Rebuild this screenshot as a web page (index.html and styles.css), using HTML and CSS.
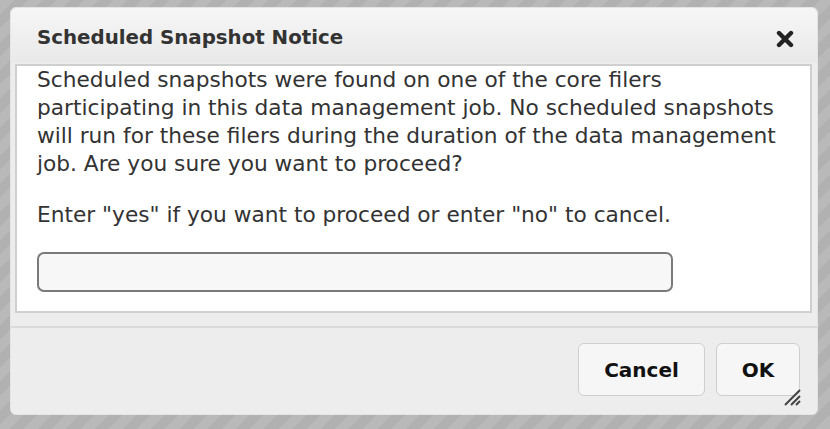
FILE: index.html
```html
<!DOCTYPE html>
<html>
<head>
<meta charset="utf-8">
<link rel="stylesheet" href="styles.css">
</head>
<body>
<div class="dialog">
  <div class="titlebar">
    <span class="title">Scheduled Snapshot Notice</span>
    <span class="close"><svg width="18" height="18" viewBox="0 0 18 18"><path d="M3 3 L15 15 M15 3 L3 15" stroke="#222" stroke-width="4.4" stroke-linecap="round"/></svg></span>
  </div>
  <div class="content">
    <p class="msg">Scheduled snapshots were found on one of the core filers participating in this data management job. No scheduled snapshots will run for these filers during the duration of the data management job. Are you sure you want to proceed?</p>
    <p class="msg second">Enter "yes" if you want to proceed or enter "no" to cancel.</p>
    <input class="answer" type="text">
  </div>
  <div class="footer">
    <button class="btn cancel">Cancel</button>
    <button class="btn ok">OK</button>
  </div>
  <svg class="grip" width="18" height="18" viewBox="0 0 18 18"><path d="M17 2 L2 17 M17 8 L8 17 M17 13 L13 17" stroke="#444" stroke-width="2"/></svg>
</div>
</body>
</html>
```
FILE: styles.css
```css
html, body {
  margin: 0;
  padding: 0;
}
body {
  width: 830px;
  height: 429px;
  overflow: hidden;
  background: repeating-linear-gradient(135deg, #b9b9b9 0 10px, #b1b1b1 10px 20px);
  font-family: "DejaVu Sans", Verdana, sans-serif;
}
.dialog {
  position: relative;
  margin: 7px 0 0 10px;
  width: 806px;
  height: 406px;
  background: #ededed;
  border: 1px solid #e4e4e4;
  border-radius: 6px;
  display: flex;
  flex-direction: column;
  box-sizing: content-box;
}
.titlebar {
  height: 55px;
  display: flex;
  align-items: center;
  justify-content: space-between;
  padding: 0 23px 0 26px;
  background: linear-gradient(#f6f6f6, #e9e9e9);
  border-radius: 6px 6px 0 0;
}
.title {
  font-weight: bold;
  font-size: 19.8px;
  color: #333;
  margin-top: 3px;
}
.close {
  display: flex;
  margin-top: 7px;
}
.content {
  margin: 1px 5px 0 4px;
  height: 245px;
  background: #fff;
  border: 2px solid #cfcfcf;
  padding: 0 20px;
}
.msg {
  margin: 0;
  font-size: 21.7px;
  line-height: 28px;
  color: #333;
}
.second {
  margin-top: 23px;
}
.answer {
  display: block;
  margin-top: 23px;
  width: 636px;
  height: 40px;
  box-sizing: border-box;
  border: 2px solid #7a7a7a;
  border-radius: 7px;
  background: #f7f7f7;
}
.footer {
  margin-top: 13px;
  border-top: 2px solid #dadada;
  display: flex;
  justify-content: flex-end;
  gap: 11px;
  padding: 15px 17px 0 0;
}
.btn {
  height: 53px;
  border: 1px solid #cfcfcf;
  border-radius: 6px;
  background: #f6f6f6;
  font-family: "DejaVu Sans", Verdana, sans-serif;
  font-weight: bold;
  font-size: 20px;
  color: #111;
}
.cancel { width: 127px; }
.ok { width: 84px; }
.grip {
  position: absolute;
  right: 16px;
  bottom: 8px;
}
```
